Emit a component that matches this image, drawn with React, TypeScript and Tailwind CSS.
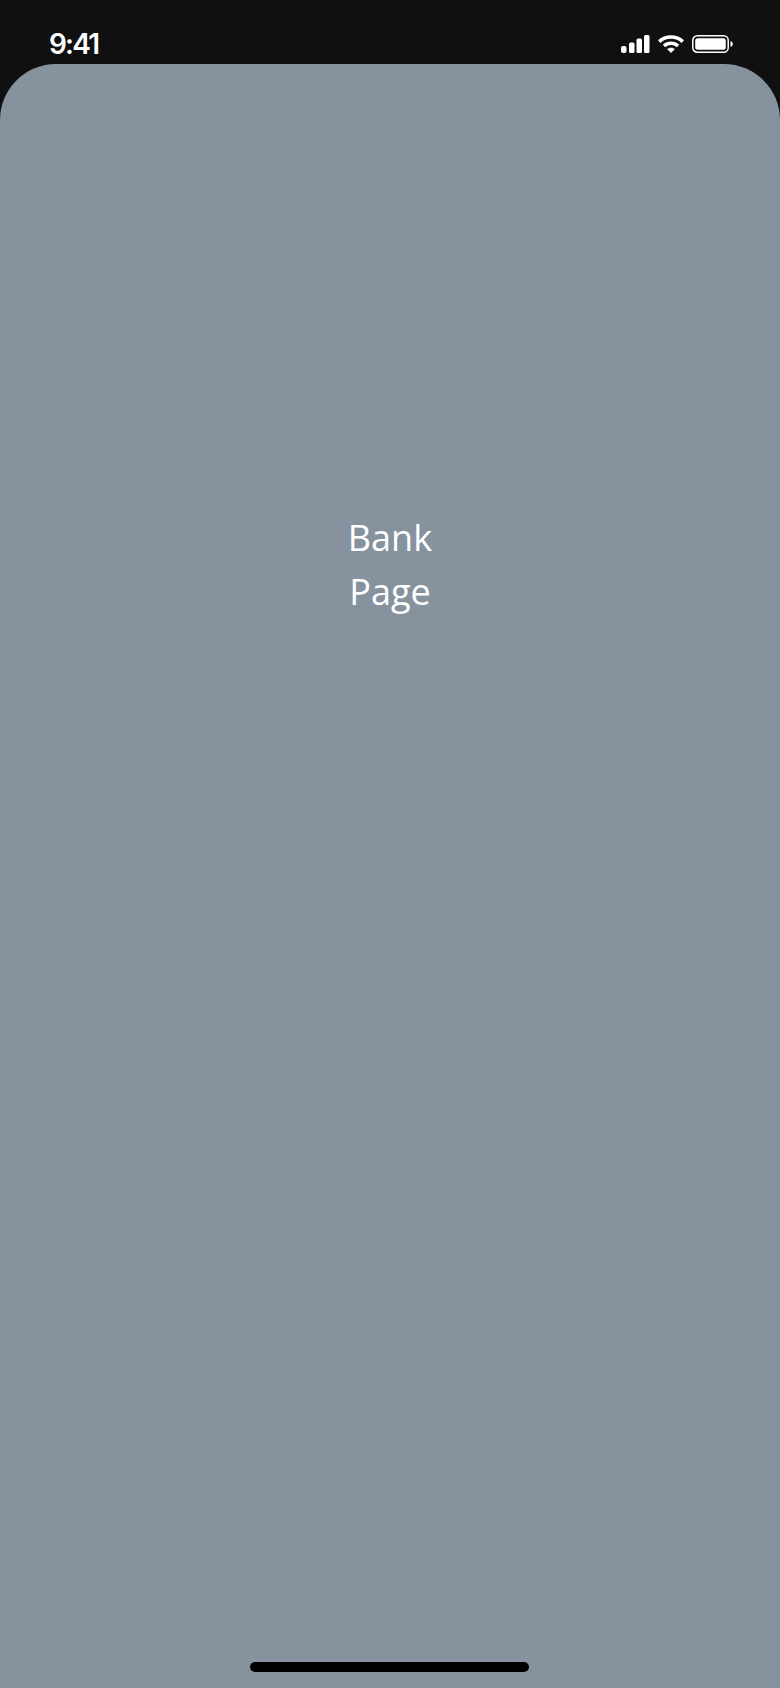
function SignalIcon() {
  return (
    <svg width="29" height="18" viewBox="0 0 29 18" fill="white">
      <rect x="0" y="11" width="5.5" height="7" rx="2" />
      <rect x="8" y="7.5" width="5.5" height="10.5" rx="1.5" />
      <rect x="15.5" y="3.5" width="5.5" height="14.5" rx="1.5" />
      <rect x="23" y="0" width="5.5" height="18" rx="1.5" />
    </svg>
  );
}

function WifiIcon() {
  return (
    <svg width="26" height="18" viewBox="0 0 26 18" fill="none" stroke="white" strokeWidth="3.6">
      <path d="M1.2 6.6C7.8 0.4 18.2 0.4 24.8 6.6" />
      <path d="M6 11C10 7.4 16 7.4 20 11" />
      <path d="M9.5 14.2L13 17.6L16.5 14.2C14.5 12.6 11.5 12.6 9.5 14.2Z" fill="white" strokeWidth="0.6" />
    </svg>
  );
}

function BatteryIcon() {
  return (
    <svg width="41" height="18" viewBox="0 0 41 18" fill="none">
      <rect x="0.8" y="0.8" width="35.4" height="16.4" rx="4.5" stroke="white" strokeWidth="1.5" />
      <rect x="3.2" y="3.2" width="30.6" height="11.6" rx="2.5" fill="white" />
      <path d="M38.5 6C40 6.5 40.8 7.6 40.8 9C40.8 10.4 40 11.5 38.5 12Z" fill="white" />
    </svg>
  );
}

export default function App() {
  return (
    <div className="flex h-[1688px] w-[780px] flex-col overflow-hidden bg-[#101010]">
      {/* status bar */}
      <div className="flex h-16 shrink-0 items-end justify-between pb-[5px] pl-[49px] pr-[47px]">
        <span className="font-['Inter',sans-serif] text-[28px] leading-[30px] font-semibold tracking-[-1.8px] text-white">
          9:41
        </span>
        <div className="flex items-center gap-2 pb-[6px]">
          <SignalIcon />
          <WifiIcon />
          <BatteryIcon />
        </div>
      </div>

      {/* page */}
      <div className="relative flex flex-1 flex-col items-center rounded-t-[56px] bg-[#87929f] pt-[447px]">
        <p className="text-center font-['Open_Sans',sans-serif] text-[36px] leading-[54px] font-medium text-white">
          Bank
          <br />
          Page
        </p>
        <div className="absolute bottom-4 left-[250px] h-[10px] w-[279px] rounded-full bg-black" />
      </div>
    </div>
  );
}
